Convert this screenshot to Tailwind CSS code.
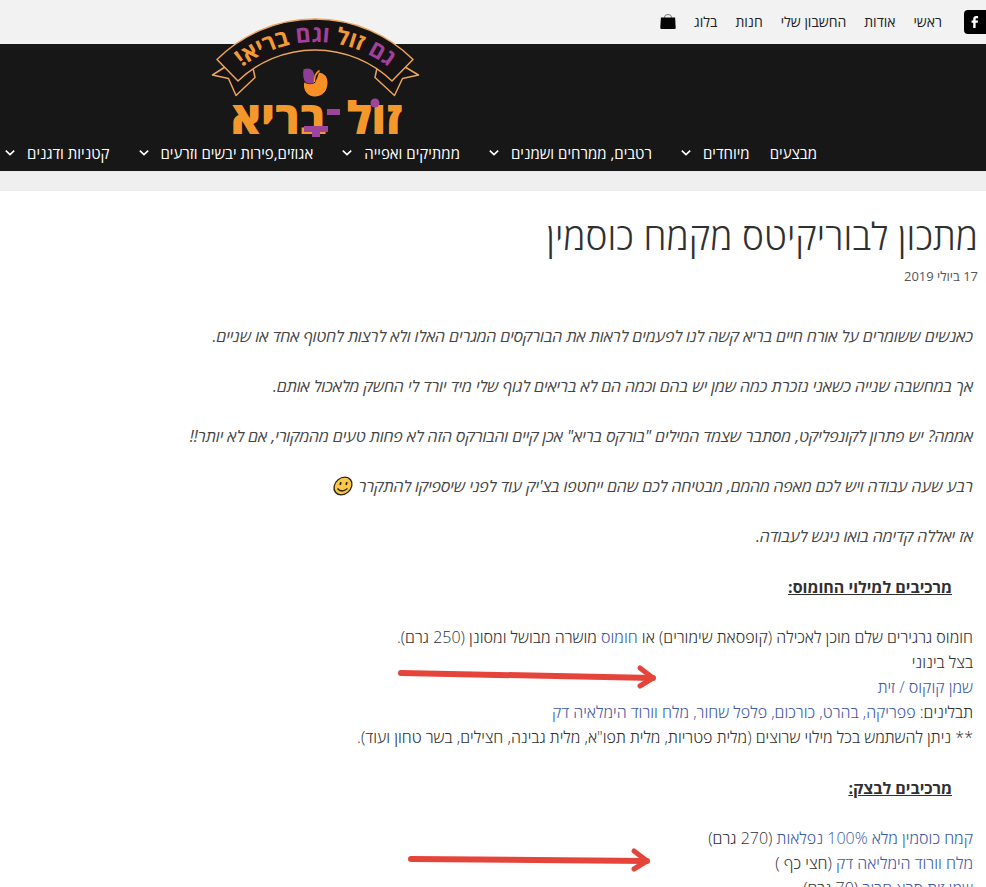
<!DOCTYPE html>
<html lang="he" dir="rtl">
<head>
<meta charset="utf-8">
<meta name="viewport" content="width=device-width, initial-scale=1">
<title>מתכון לבוריקיטס מקמח כוסמין</title>
<script src="https://cdn.jsdelivr.net/npm/@tailwindcss/browser@4"></script>
</head>
<body class="bg-white font-['Open_Sans','Noto_Sans',sans-serif] text-[#303030] overflow-x-hidden h-screen overflow-y-hidden">
<header class="relative">
  <div class="flex h-11 items-center bg-[#f2f2f2] text-sm text-[#222]">
    <a href="#" aria-label="Facebook" class="flex h-6 w-[22px] shrink-0 items-center justify-center rounded-r-none rounded-l-sm bg-black">
      <svg class="h-3 w-2" viewBox="0 0 8 12" fill="#fff"><path d="M2.2 12V6.8H.5V4.6h1.7V3.1C2.2 1.1 3.4.1 5.2.1c.9 0 1.6.1 1.9.1v2H5.8c-1 0-1.2.5-1.2 1.2v1.2H7l-.3 2.2H4.6V12z"/></svg>
    </a>
    <nav class="mr-[22px] flex items-center gap-[18px] whitespace-nowrap">
      <a href="#">ראשי</a><a href="#">אודות</a><a href="#">החשבון שלי</a><a href="#">חנות</a><a href="#">בלוג</a>
      <a href="#" aria-label="סל קניות"><svg class="h-4 w-4" viewBox="0 0 16 16"><path d="M4.500 4V3.200a3.500 2.700 0 0 1 7 0V4" fill="none" stroke="#777"/><path d="M.9 3.500h14.200l.6 10.600q0 .900-1 .900H1.300q-1 0-1-.900z" fill="#050505"/></svg></a>
    </nav>
  </div>
  <div class="flex h-[127px] items-end bg-[#171717] pb-1">
    <nav class="mr-[169px] flex h-7 items-center whitespace-nowrap text-[15px] text-white">
      <a href="#">מבצעים</a>
      <a href="#" class="mr-5 flex items-center gap-3">מיוחדים<svg class="h-[6px] w-[10px]" viewBox="0 0 10 6" fill="none" stroke="#fff" stroke-width="1.600"><path d="m.8.700 4.200 4 4.200-4"/></svg></a>
      <a href="#" class="mr-[29px] flex items-center gap-3">רטבים, ממרחים ושמנים<svg class="h-[6px] w-[10px]" viewBox="0 0 10 6" fill="none" stroke="#fff" stroke-width="1.600"><path d="m.8.700 4.200 4 4.200-4"/></svg></a>
      <a href="#" class="mr-[29px] flex items-center gap-3">ממתיקים ואפייה<svg class="h-[6px] w-[10px]" viewBox="0 0 10 6" fill="none" stroke="#fff" stroke-width="1.600"><path d="m.8.700 4.200 4 4.200-4"/></svg></a>
      <a href="#" class="mr-[29px] flex items-center gap-3">אגוזים,פירות יבשים וזרעים<svg class="h-[6px] w-[10px]" viewBox="0 0 10 6" fill="none" stroke="#fff" stroke-width="1.600"><path d="m.8.700 4.200 4 4.200-4"/></svg></a>
      <a href="#" class="mr-[29px] flex items-center gap-3">קטניות ודגנים<svg class="h-[6px] w-[10px]" viewBox="0 0 10 6" fill="none" stroke="#fff" stroke-width="1.600"><path d="m.8.700 4.200 4 4.200-4"/></svg></a>
    </nav>
  </div>
  <a href="#" aria-label="זול בריא" class="absolute top-4 right-[566px]">
    <svg class="h-[124px] w-[210px] overflow-visible" viewBox="210 16 210 124" font-family="'Open Sans','Noto Sans',sans-serif">
      <g fill="#171314" stroke="#e9a55c" stroke-width="1.500" stroke-linejoin="round">
        <path d="M225 67 212.500 75l16 3.500L236 95.500 255 77.500l-2-9.500-15 12z"/>
        <path d="M405 67l13.500 8-16 3.500L394.500 95.500 375 77.500l2-9.500 15 12z"/>
        <path d="M217 59.500A139 139 0 0 1 413 59.500L392 81A111 111 0 0 0 238 81z"/>
      </g>
      <path id="arc" d="M224.300 84.500A119 119 0 0 1 406.700 84.500" fill="none"/>
      <text font-size="23" font-weight="700" text-anchor="middle" direction="rtl" fill="#f39a35"><textPath href="#arc" startOffset="50%"><tspan fill="#a3409b">גם</tspan> זול <tspan fill="#a3409b">וגם</tspan> בריא!</textPath></text>
      <path d="M315 83q2-4 4-10.500 8 1 8.500 10 0 8-5.500 12-4 2.500-8 2-6-.500-9-6-1.500-4-1-8 6 3 11 .500z" fill="#f98f25"/>
      <path d="M303.500 69.500q5-2.500 9 1 3 4 1.500 12.500-7 2-9.500-2-2-5-1-11.500z" fill="#8d4093"/>
      <path d="M314.500 82q-.500-8 5-11.500" fill="none" stroke="#f98f25" stroke-width="1.500"/>
      <g fill="#f5982c" font-size="45" font-weight="800" direction="rtl">
        <text x="402" y="134">זול</text><text x="326" y="134">בריא</text>
      </g>
      <g fill="#9d459c"><circle cx="375" cy="103" r="4.500"/><path d="M327 109h13v6h-13zM304 126h24v6h-8v5h-8v-5h-8z"/></g>
    </svg>
  </a>
  <div class="h-5 border-y border-[#eaeaea] bg-[#efefef]"></div>
</header>
<main class="relative pt-[22px]">
  <header class="px-2">
    <h1 class="text-[37px] leading-[46px] font-light">מתכון לבוריקיטס מקמח כוסמין</h1>
    <time datetime="2019-07-17" class="mt-[5px] block text-[13px] leading-6 text-[#555]">17 ביולי 2019</time>
  </header>
  <article class="mt-9 flex flex-col gap-[25px] px-[13px] text-base leading-[25px] font-light">
    <p class="font-normal text-[#444] italic">כאנשים ששומרים על אורח חיים בריא קשה לנו לפעמים לראות את הבורקסים המגרים האלו ולא לרצות לחטוף אחד או שניים.</p>
    <p class="font-normal text-[#444] italic">אך במחשבה שנייה כשאני נזכרת כמה שמן יש בהם וכמה הם לא בריאים לגוף שלי מיד יורד לי החשק מלאכול אותם.</p>
    <p class="font-normal text-[#444] italic">אממה? יש פתרון לקונפליקט, מסתבר שצמד המילים "בורקס בריא" אכן קיים והבורקס הזה לא פחות טעים מהמקורי, אם לא יותר!!</p>
    <p class="font-normal text-[#444] italic">רבע שעה עבודה ויש לכם מאפה מהמם, מבטיחה לכם שהם ייחטפו בצ'יק עוד לפני שיספיקו להתקרר <svg class="inline h-5 w-[22px] align-[-4px]" viewBox="0 0 22 20" role="img" aria-label="חיוך"><g transform="translate(11 10) skewX(-12)"><circle r="8.800" fill="#fdc843" stroke="#2b2414" stroke-width="1.300"/><ellipse cx="-3" cy="-2.500" rx="1" ry="1.700" fill="#2b2414"/><ellipse cx="3" cy="-2.500" rx="1" ry="1.700" fill="#2b2414"/><path d="M-5 2.500q5 5 10 0" fill="none" stroke="#2b2414" stroke-width="1.300"/></g></svg></p>
    <p class="font-normal text-[#444] italic">אז יאללה קדימה בואו ניגש לעבודה.</p>
    <h2 class="pr-[21px] leading-[26px] font-bold underline">מרכיבים למילוי החומוס:</h2>
    <p>חומוס גרגירים שלם מוכן לאכילה (קופסאת שימורים) או <a href="#" class="text-[#4059a5]">חומוס</a> מושרה מבושל ומסונן (250 גרם).<br>בצל בינוני<br><a href="#" class="text-[#4059a5]">שמן קוקוס / זית</a><br>תבלינים: <a href="#" class="text-[#4059a5]">פפריקה, בהרט, כורכום, פלפל שחור, מלח וורוד הימלאיה דק</a><br>** ניתן להשתמש בכל מילוי שרוצים (מלית פטריות, מלית תפו"א, מלית גבינה, חצילים, בשר טחון ועוד).</p>
    <h2 class="pr-[21px] leading-[26px] font-bold underline">מרכיבים לבצק:</h2>
    <p><a href="#" class="text-[#4059a5]">קמח כוסמין מלא 100% נפלאות</a> (270 גרם)<br><a href="#" class="text-[#4059a5]">מלח וורוד הימליאה דק</a> (חצי כף )<br><a href="#" class="text-[#4059a5]">שמן זית סבא חביב</a> (70 גרם)</p>
  </article>
  <svg class="absolute top-[472px] right-[327px] h-7 w-[262px]" viewBox="0 0 262 28" fill="none" stroke="#e5443a" stroke-linecap="round" stroke-linejoin="round" aria-hidden="true"><path d="M4 10 256 15" stroke-width="6"/><path d="M243 5 256 15 243 23" stroke-width="5"/></svg>
  <svg class="absolute top-[655px] right-[333px] h-7 w-[246px]" viewBox="0 0 246 28" fill="none" stroke="#e5443a" stroke-linecap="round" stroke-linejoin="round" aria-hidden="true"><path d="M4 13 240 15" stroke-width="6"/><path d="M227 5 240 15 227 23" stroke-width="5"/></svg>
</main>
</body>
</html>
